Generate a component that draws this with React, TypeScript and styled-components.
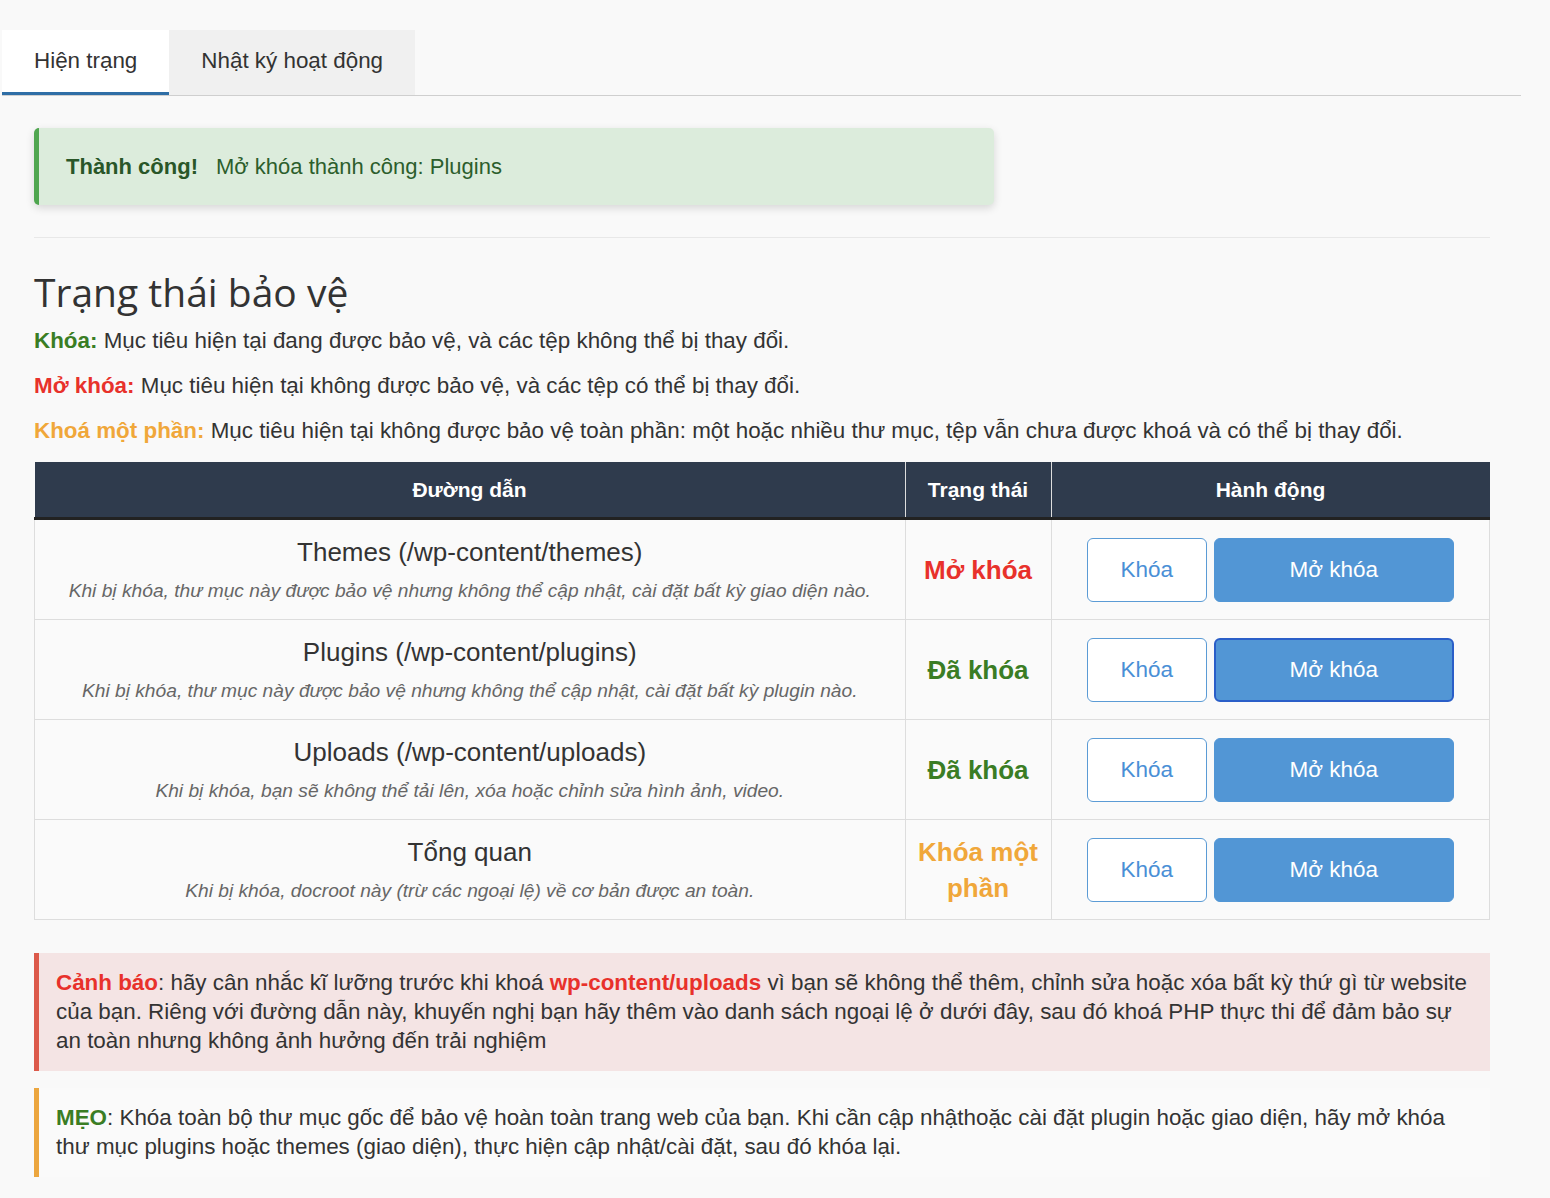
import styled, { createGlobalStyle } from 'styled-components'

const GlobalStyle = createGlobalStyle`
  body {
    margin: 0;
    background: #f9f9f9;
    font-family: 'Liberation Sans', Arial, sans-serif;
    color: #333;
  }
`

const Wrap = styled.div`
  width: 1519px;
  padding: 30px 0 30px 2px;
`

const TabBar = styled.div`
  display: flex;
  border-bottom: 1px solid #cfcfcf;
`

const Tab = styled.div<{ $active?: boolean }>`
  height: 62px;
  padding: 0 32px;
  display: flex;
  align-items: center;
  font-size: 22.4px;
  color: #333;
  background: ${(p) => (p.$active ? '#fff' : '#f0f0f0')};
  border-bottom: 3px solid ${(p) => (p.$active ? '#2f6ea6' : 'transparent')};
`

const Content = styled.div`
  padding: 32px 31px 0 32px;
`

const Alert = styled.div`
  width: 960px;
  height: 77px;
  box-sizing: border-box;
  display: flex;
  align-items: center;
  padding-left: 27px;
  background: #dcecdc;
  border-left: 5px solid #4fa64f;
  border-radius: 5px;
  box-shadow: 0 3px 8px rgba(0, 0, 0, 0.14);
  font-size: 22px;
  color: #2c5e2c;

  b {
    margin-right: 18px;
    color: #295628;
  }
`

const Rule = styled.hr`
  border: none;
  border-top: 1px solid #e8e8e8;
  margin: 32px 0 0;
`

const Heading = styled.h2`
  font-family: 'Open Sans', sans-serif;
  font-weight: 400;
  font-size: 39px;
  color: #333;
  margin: 29px 0 11px;
  line-height: 50px;
`

const LegendList = styled.div`
  display: flex;
  flex-direction: column;
  gap: 19px;
`

const Legend = styled.p`
  font-size: 22.4px;
  line-height: 26px;
  margin: 0;
`

const Tag = styled.b<{ $color: string }>`
  color: ${(p) => p.$color};
`

const Table = styled.table`
  width: 1456px;
  border-collapse: collapse;
  table-layout: fixed;
  margin-top: 18px;
`

const Th = styled.th<{ $w?: number }>`
  background: #2f3b4d;
  color: #fff;
  font-size: 21px;
  font-weight: 700;
  height: 55px;
  padding: 0;
  border-left: 1px solid #ddd;
  border-bottom: 3px solid #222;
  width: ${(p) => (p.$w ? `${p.$w}px` : 'auto')};
  &:first-child {
    border-left: none;
  }
`

const Td = styled.td`
  background: #fafafa;
  border: 1px solid #ddd;
  text-align: center;
  height: 99px;
  padding: 0;
`

const PathTitle = styled.div`
  font-size: 26px;
  color: #333;
  line-height: 30px;
  margin-bottom: 13px;
`

const PathDesc = styled.div`
  font-size: 19.2px;
  font-style: italic;
  color: #666;
  line-height: 22px;
`

const Status = styled.div<{ $color: string }>`
  font-size: 26px;
  font-weight: 700;
  line-height: 36px;
  color: ${(p) => p.$color};
  padding: 0 12px;
`

const Actions = styled.div`
  display: flex;
  justify-content: center;
  gap: 7px;
`

const Btn = styled.button<{ $primary?: boolean; $focus?: boolean }>`
  font-family: 'Liberation Sans', Arial, sans-serif;
  font-size: 22.5px;
  height: 64px;
  width: ${(p) => (p.$primary ? '240px' : '120px')};
  border-radius: 6px;
  cursor: pointer;
  border: ${(p) =>
    p.$focus ? '2px solid #2a5ec8' : p.$primary ? '1px solid #5296d5' : '1px solid #5b9bd5'};
  background: ${(p) => (p.$primary ? '#5296d5' : '#fff')};
  color: ${(p) => (p.$primary ? '#fff' : '#4a8fd6')};
`

const Note = styled.div<{ $border: string; $bg: string; $gap: number }>`
  margin-top: ${(p) => p.$gap}px;
  background: ${(p) => p.$bg};
  border-left: 5px solid ${(p) => p.$border};
  padding: 15px 20px 16px 17px;
  font-size: 22.4px;
  line-height: 29px;
  color: #333;
`

const RED = '#e8312b'
const GREEN = '#3a7d24'
const ORANGE = '#f0a73a'

const rows = [
  {
    title: 'Themes (/wp-content/themes)',
    desc: 'Khi bị khóa, thư mục này được bảo vệ nhưng không thể cập nhật, cài đặt bất kỳ giao diện nào.',
    status: 'Mở khóa',
    color: RED,
  },
  {
    title: 'Plugins (/wp-content/plugins)',
    desc: 'Khi bị khóa, thư mục này được bảo vệ nhưng không thể cập nhật, cài đặt bất kỳ plugin nào.',
    status: 'Đã khóa',
    color: GREEN,
    focus: true,
  },
  {
    title: 'Uploads (/wp-content/uploads)',
    desc: 'Khi bị khóa, bạn sẽ không thể tải lên, xóa hoặc chỉnh sửa hình ảnh, video.',
    status: 'Đã khóa',
    color: GREEN,
  },
  {
    title: 'Tổng quan',
    desc: 'Khi bị khóa, docroot này (trừ các ngoại lệ) về cơ bản được an toàn.',
    status: 'Khóa một phần',
    color: ORANGE,
  },
]

export default function App() {
  return (
    <>
      <GlobalStyle />
      <Wrap>
        <TabBar>
          <Tab $active>Hiện trạng</Tab>
          <Tab>Nhật ký hoạt động</Tab>
        </TabBar>
        <Content>
          <Alert>
            <b>Thành công!</b> Mở khóa thành công: Plugins
          </Alert>
          <Rule />
          <Heading>Trạng thái bảo vệ</Heading>
          <LegendList>
            <Legend>
              <Tag $color={GREEN}>Khóa:</Tag> Mục tiêu hiện tại đang được bảo vệ, và các tệp không thể bị thay đổi.
            </Legend>
            <Legend>
              <Tag $color={RED}>Mở khóa:</Tag> Mục tiêu hiện tại không được bảo vệ, và các tệp có thể bị thay đổi.
            </Legend>
            <Legend>
              <Tag $color={ORANGE}>Khoá một phần:</Tag> Mục tiêu hiện tại không được bảo vệ toàn phần: một hoặc nhiều thư mục, tệp vẫn chưa được khoá và có thể bị thay đổi.
            </Legend>
          </LegendList>
          <Table>
            <thead>
              <tr>
                <Th>Đường dẫn</Th>
                <Th $w={145}>Trạng thái</Th>
                <Th $w={438}>Hành động</Th>
              </tr>
            </thead>
            <tbody>
              {rows.map((r) => (
                <tr key={r.title}>
                  <Td>
                    <PathTitle>{r.title}</PathTitle>
                    <PathDesc>{r.desc}</PathDesc>
                  </Td>
                  <Td>
                    <Status $color={r.color}>{r.status}</Status>
                  </Td>
                  <Td>
                    <Actions>
                      <Btn>Khóa</Btn>
                      <Btn $primary $focus={r.focus}>
                        Mở khóa
                      </Btn>
                    </Actions>
                  </Td>
                </tr>
              ))}
            </tbody>
          </Table>
          <Note $border="#dc5a4b" $bg="#f4e4e4" $gap={33}>
            <Tag $color={RED}>Cảnh báo</Tag>: hãy cân nhắc kĩ lưỡng trước khi khoá{' '}
            <Tag $color={RED}>wp-content/uploads</Tag> vì bạn sẽ không thể thêm, chỉnh sửa hoặc xóa bất kỳ thứ gì từ website của bạn. Riêng với đường dẫn này, khuyến nghị bạn hãy thêm vào danh sách ngoại lệ ở dưới đây, sau đó khoá PHP thực thi để đảm bảo sự an toàn nhưng không ảnh hưởng đến trải nghiệm
          </Note>
          <Note $border="#eca63f" $bg="#fafafa" $gap={17}>
            <Tag $color={GREEN}>MẸO</Tag>: Khóa toàn bộ thư mục gốc để bảo vệ hoàn toàn trang web của bạn. Khi cần cập nhậthoặc cài đặt plugin hoặc giao diện, hãy mở khóa thư mục plugins hoặc themes (giao diện), thực hiện cập nhật/cài đặt, sau đó khóa lại.
          </Note>
        </Content>
      </Wrap>
    </>
  )
}
